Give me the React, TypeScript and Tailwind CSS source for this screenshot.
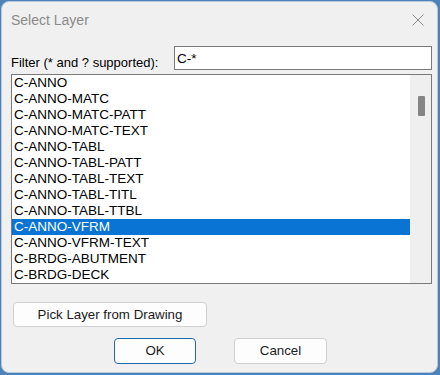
const layers = [
  "C-ANNO",
  "C-ANNO-MATC",
  "C-ANNO-MATC-PATT",
  "C-ANNO-MATC-TEXT",
  "C-ANNO-TABL",
  "C-ANNO-TABL-PATT",
  "C-ANNO-TABL-TEXT",
  "C-ANNO-TABL-TITL",
  "C-ANNO-TABL-TTBL",
  "C-ANNO-VFRM",
  "C-ANNO-VFRM-TEXT",
  "C-BRDG-ABUTMENT",
  "C-BRDG-DECK",
];

const selected = "C-ANNO-VFRM";

export default function App() {
  return (
    <div className="h-[375px] w-[440px] bg-[#4f82b8] pb-[2px] pl-[1px] pr-[2px] pt-[1px] font-['Liberation_Sans',Arial,sans-serif] text-[13px] text-black">
      <div className="flex h-full w-full flex-col rounded-[8px] border border-[#b4c9de] bg-[#f0f0f0]">
        {/* title bar */}
        <div className="flex h-[36px] items-center justify-between pl-[9px] pr-[13px]">
          <span className="text-[14px] text-[#8a8a8a]">Select Layer</span>
          <svg width="12" height="12" viewBox="0 0 12 12" className="text-[#8a8a8a]">
            <path d="M0.5 0.5 L11.5 11.5 M11.5 0.5 L0.5 11.5" stroke="currentColor" strokeWidth="1" fill="none" />
          </svg>
        </div>

        <div className="flex flex-col pl-[9px] pr-[5px]">
          {/* filter row */}
          <div className="mt-[8px] flex h-[24px] items-end">
            <span className="w-[163px] leading-[15px]">Filter (* and ? supported):</span>
            <div className="flex h-[24px] flex-1 items-center border border-[#7a7a7a] bg-white pl-[2px] text-[13.5px] leading-[15px]">
              C-*
            </div>
          </div>

          {/* layer list */}
          <div className="mt-[4px] flex h-[210px] border border-[#7a7a7a] bg-white text-[13.5px]">
            <div className="flex flex-1 flex-col">
              {layers.map((name) => (
                <div
                  key={name}
                  className={
                    name === selected
                      ? "flex h-[16px] items-center bg-[#0a74d4] pl-[2px] leading-[16px] text-white"
                      : "flex h-[16px] items-center pl-[2px] leading-[16px]"
                  }
                >
                  {name}
                </div>
              ))}
            </div>
            <div className="flex w-[21px] flex-col items-center bg-[#efefef]">
              <div className="ml-[1px] mt-[21px] h-[20px] w-[7px] rounded-[1px] bg-[#858585]" />
            </div>
          </div>

          {/* pick button */}
          <button
            type="button"
            className="ml-[2px] mt-[18px] h-[25px] w-[194px] rounded-[4px] border border-[#d0d0d0] bg-[#fdfdfd] text-[13.3px] text-[#1b1b1b]"
          >
            Pick Layer from Drawing
          </button>

          {/* ok / cancel */}
          <div className="mt-[11px] flex text-[13.3px]">
            <button
              type="button"
              className="ml-[103px] h-[26px] w-[82px] rounded-[4px] border border-[#1f6bb0] bg-[#fdfdfd] text-[#1b1b1b]"
            >
              OK
            </button>
            <button
              type="button"
              className="ml-[38px] h-[26px] w-[93px] rounded-[4px] border border-[#d0d0d0] bg-[#fdfdfd] text-[#1b1b1b]"
            >
              Cancel
            </button>
          </div>
        </div>
      </div>
    </div>
  );
}
